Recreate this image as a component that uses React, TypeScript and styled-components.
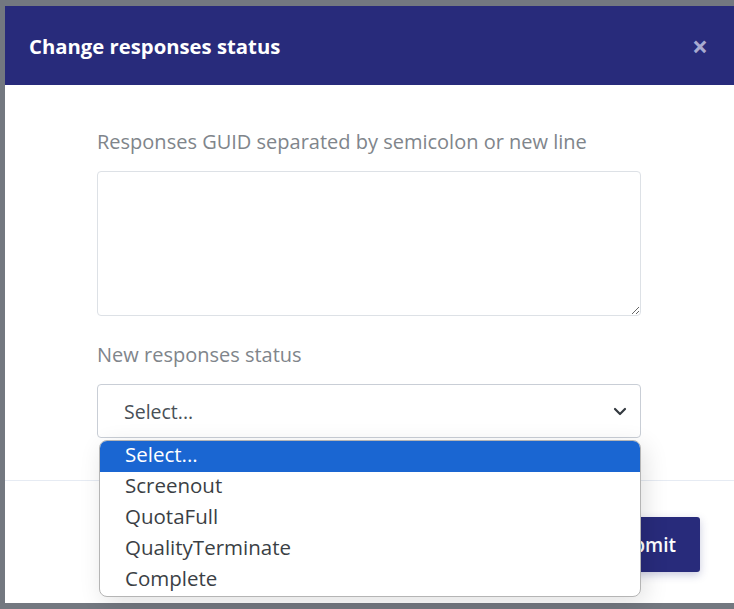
import React from 'react';
import styled, { createGlobalStyle } from 'styled-components';

const GlobalStyle = createGlobalStyle`
  html, body {
    margin: 0;
    padding: 0;
    background: #737880;
    overflow: hidden;
  }
  * {
    box-sizing: border-box;
  }
`;

const font = `"Open Sans", Lato, sans-serif`;

const Backdrop = styled.div`
  height: 609px;
  padding: 6px 0 0 5px;
  background: #737880;
`;

const Modal = styled.div`
  position: relative;
  width: 729px;
  height: 597px;
  background: #ffffff;
  display: flex;
  flex-direction: column;
  font-family: ${font};
`;

const Header = styled.div`
  height: 79px;
  flex: none;
  background: #282b7b;
  display: flex;
  align-items: center;
  justify-content: space-between;
  padding: 0 26px 0 24px;
`;

const Title = styled.h5`
  margin: 0;
  color: #ffffff;
  font-size: 20.3px;
  font-weight: 700;
`;

const Close = styled.span`
  color: #a7aad0;
  font-size: 28px;
  font-weight: 700;
  line-height: 1;
`;

const Body = styled.div`
  flex: 1;
  padding: 45px 93px 0 92px;
  display: flex;
  flex-direction: column;
`;

const Label = styled.label`
  color: #80858b;
  font-size: 20px;
  line-height: 24px;
  margin-bottom: 17px;
`;

const TextArea = styled.textarea`
  width: 544px;
  height: 145px;
  border: 1px solid #dde1e6;
  border-radius: 4px;
  margin: 0 0 27px;
  font-family: ${font};
  resize: vertical;
`;

const SelectBox = styled.div`
  position: relative;
  width: 544px;
  height: 54px;
  border: 1px solid #c9ced6;
  border-radius: 4px;
  display: flex;
  align-items: center;
  justify-content: space-between;
  padding: 0 12px 0 26px;
  color: #495057;
  font-size: 19.5px;
`;

const Footer = styled.div`
  height: 123px;
  flex: none;
  border-top: 1px solid #e6ebf3;
  display: flex;
  justify-content: flex-end;
  align-items: flex-start;
  padding: 36px 34px 0 0;
`;

const SubmitButton = styled.button`
  height: 55px;
  padding: 0 24px;
  border: none;
  border-radius: 3px;
  background: #282b7b;
  color: #ffffff;
  font-family: ${font};
  font-size: 19px;
  font-weight: 600;
  box-shadow: 0 3px 8px rgba(40, 43, 123, 0.25);
`;

const Dropdown = styled.ul`
  position: absolute;
  left: 94px;
  top: 434px;
  width: 542px;
  margin: 0;
  padding: 0;
  list-style: none;
  background: #ffffff;
  border: 1px solid #b5b5b5;
  border-radius: 8px;
  overflow: hidden;
  box-shadow: 4px 6px 24px rgba(0, 0, 0, 0.12);
`;

const Option = styled.li<{ $active?: boolean }>`
  height: 31px;
  line-height: 27px;
  padding-left: 25px;
  font-size: 20.5px;
  color: ${(p) => (p.$active ? '#ffffff' : '#3b3f45')};
  background: ${(p) => (p.$active ? '#1a66d2' : 'transparent')};
`;

const Chevron = () => (
  <svg width="16" height="16" viewBox="0 0 16 16">
    <path d="M3 6l5 5 5-5" fill="none" stroke="#343a40" strokeWidth="2.2" strokeLinecap="round" strokeLinejoin="round" />
  </svg>
);

const options = ['Select...', 'Screenout', 'QuotaFull', 'QualityTerminate', 'Complete'];

const App: React.FC = () => {
  return (
    <Backdrop>
      <GlobalStyle />
      <Modal>
        <Header>
          <Title>Change responses status</Title>
          <Close>×</Close>
        </Header>
        <Body>
          <Label>Responses GUID separated by semicolon or new line</Label>
          <TextArea />
          <Label>New responses status</Label>
          <SelectBox>
            <span>Select...</span>
            <Chevron />
          </SelectBox>
        </Body>
        <Footer>
          <SubmitButton>Submit</SubmitButton>
        </Footer>
        <Dropdown>
          {options.map((o, i) => (
            <Option key={o} $active={i === 0}>{o}</Option>
          ))}
        </Dropdown>
      </Modal>
    </Backdrop>
  );
};

export default App;
